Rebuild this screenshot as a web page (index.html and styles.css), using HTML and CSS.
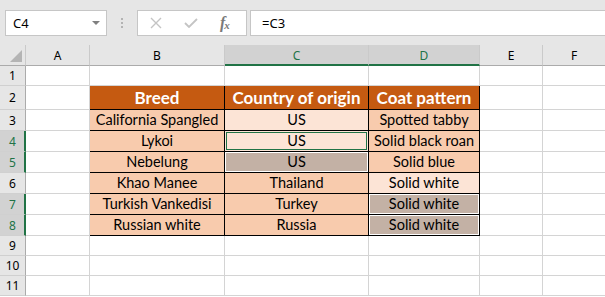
FILE: index.html
```html
<!DOCTYPE html>
<html>
<head>
<meta charset="utf-8">
<link rel="stylesheet" href="styles.css">
</head>
<body>
<div class="toolbar">
  <div class="namebox"><span>C4</span><svg class="dd" width="8" height="4" viewBox="0 0 8 4"><path d="M0 0H8L4 4Z" fill="#808080"/></svg></div>
  <div class="grip"><i></i><i></i><i></i></div>
  <div class="fxbox">
    <svg class="ic-x" width="12" height="12" viewBox="0 0 12 12"><path d="M1 1L11 11M11 1L1 11" stroke="#c4c4c4" stroke-width="1.4" fill="none"/></svg>
    <svg class="ic-ok" width="14" height="10" viewBox="0 0 14 10"><path d="M1 5L5 9L13 1" stroke="#c4c4c4" stroke-width="1.8" fill="none"/></svg>
    <span class="fx">f<sub>x</sub></span>
  </div>
  <div class="formula">=C3</div>
</div>
<div class="sheet">
  <div class="ch corner"><svg width="12" height="12" viewBox="0 0 12 12"><path d="M12 0V12H0Z" fill="#b4b4b4"/></svg></div>
  <div class="ch">A</div>
  <div class="ch">B</div>
  <div class="ch sel">C</div>
  <div class="ch sel">D</div>
  <div class="ch">E</div>
  <div class="ch">F</div>

  <div class="tbl">
    <div class="t hd">Breed</div>
    <div class="t hd">Country of origin</div>
    <div class="t hd">Coat pattern</div>

    <div class="t md">California Spangled</div>
    <div class="t lt">US</div>
    <div class="t md">Spotted tabby</div>

    <div class="t md">Lykoi</div>
    <div class="t lt active">US</div>
    <div class="t md">Solid black roan</div>

    <div class="t md">Nebelung</div>
    <div class="t gr">US</div>
    <div class="t md">Solid blue</div>

    <div class="t md">Khao Manee</div>
    <div class="t md">Thailand</div>
    <div class="t lt">Solid white</div>

    <div class="t md">Turkish Vankedisi</div>
    <div class="t md">Turkey</div>
    <div class="t gr">Solid white</div>

    <div class="t md">Russian white</div>
    <div class="t md">Russia</div>
    <div class="t gr">Solid white</div>
  </div>

  <div class="rh">1</div><div class="c"></div><div class="c"></div><div class="c"></div><div class="c"></div><div class="c"></div><div class="c"></div>
  <div class="rh">2</div><div class="c"></div><div class="c"></div><div class="c"></div>
  <div class="rh">3</div><div class="c"></div><div class="c"></div><div class="c"></div>
  <div class="rh sel">4</div><div class="c"></div><div class="c"></div><div class="c"></div>
  <div class="rh sel">5</div><div class="c"></div><div class="c"></div><div class="c"></div>
  <div class="rh">6</div><div class="c"></div><div class="c"></div><div class="c"></div>
  <div class="rh sel">7</div><div class="c"></div><div class="c"></div><div class="c"></div>
  <div class="rh sel">8</div><div class="c"></div><div class="c"></div><div class="c"></div>
  <div class="rh">9</div><div class="c"></div><div class="c"></div><div class="c"></div><div class="c"></div><div class="c"></div><div class="c"></div>
  <div class="rh">10</div><div class="c"></div><div class="c"></div><div class="c"></div><div class="c"></div><div class="c"></div><div class="c"></div>
  <div class="rh">11</div><div class="c"></div><div class="c"></div><div class="c"></div><div class="c"></div><div class="c"></div><div class="c"></div>
</div>
</body>
</html>
```

FILE: styles.css
```css
* { box-sizing: border-box; margin: 0; padding: 0; }
html, body { margin: 0; }
body {
  width: 605px;
  height: 297px;
  overflow: hidden;
  background: #fff;
  font-family: "Lato", sans-serif;
  color: #000;
}

.toolbar {
  height: 45px;
  background: #e6e6e6;
  display: flex;
  align-items: flex-start;
  padding: 10px 0 0 5px;
}
.namebox {
  width: 102px;
  height: 26px;
  background: #fff;
  border: 1px solid #c6c6c6;
  display: flex;
  align-items: center;
  justify-content: space-between;
  padding: 0 6px 0 7px;
  font-family: "Noto Sans", sans-serif;
  font-size: 13px;
}
.grip {
  width: 30px;
  display: flex;
  flex-direction: column;
  align-items: center;
  gap: 2px;
  padding-top: 8px;
}
.grip i {
  display: block;
  width: 2px;
  height: 2px;
  background: #b3b3b3;
}
.fxbox {
  width: 110px;
  height: 26px;
  background: #fff;
  border: 1px solid #c6c6c6;
  display: flex;
  align-items: center;
  padding-left: 12px;
}
.ic-x { margin-right: 22px; }
.ic-ok { margin-right: 22px; }
.fx {
  font-family: "Liberation Serif", serif;
  font-style: italic;
  font-weight: 700;
  font-size: 16px;
  color: #7a7a7a;
  letter-spacing: -1px;
  line-height: 1;
}
.fx sub { font-size: 11px; vertical-align: -1px; }
.formula {
  flex: 1;
  margin-left: 3px;
  height: 26px;
  background: #fff;
  border: 1px solid #c6c6c6;
  border-right: none;
  padding-left: 11px;
  display: flex;
  align-items: center;
  font-family: "Noto Sans", sans-serif;
  font-size: 13px;
}

.sheet {
  display: grid;
  grid-template-columns: 26px 64px 135px 144px 111px 63px 63px;
  grid-template-rows: 21px 20px 24px repeat(6, 21px) repeat(3, 20px);
}
.c {
  border-right: 1px solid #d4d4d4;
  border-bottom: 1px solid #d4d4d4;
}
.ch {
  background: #e6e6e6;
  border-right: 1px solid #cacaca;
  border-bottom: 1px solid #ababab;
  display: flex;
  align-items: center;
  justify-content: center;
  font-family: "Noto Sans", sans-serif;
  font-size: 12px;
  padding-top: 1px;
}
.ch.sel {
  background: #d2d2d2;
  color: #217346;
  border-bottom: 2px solid #217346;
  padding-top: 2px;
}
.ch.corner {
  justify-content: flex-end;
  align-items: flex-end;
  padding: 0 3px 3px 0;
}
.rh {
  background: #e6e6e6;
  border-right: 1px solid #ababab;
  border-bottom: 1px solid #d0d0d0;
  display: flex;
  align-items: center;
  justify-content: center;
  font-family: "Noto Sans", sans-serif;
  font-size: 12px;
}
.rh.sel {
  background: #d2d2d2;
  color: #217346;
  border-right: 2px solid #217346;
  padding-left: 1px;
}

.tbl {
  grid-column: 3 / 6;
  grid-row: 3 / 10;
  margin: -1px 0 0 -1px;
  border-top: 1px solid #000;
  border-left: 1px solid #000;
  display: grid;
  grid-template-columns: 135px 144px 111px;
  grid-template-rows: 24px repeat(6, 21px);
}
.t {
  border-right: 1px solid #000;
  border-bottom: 1px solid #000;
  display: flex;
  align-items: flex-end;
  justify-content: center;
  font-size: 14.5px;
  line-height: 1;
  padding-bottom: 3px;
  white-space: nowrap;
}
.hd {
  background: #c55a11;
  color: #fff;
  font-weight: 700;
  font-size: 17px;
  padding-bottom: 3px;
}
.md { background: #f8cbad; }
.lt { background: #fce4d6; }
.gr {
  background: #c3b1a5;
  box-shadow: inset 0 0 0 1px #fff;
}
.active {
  box-shadow: inset 0 0 0 1px #fce4d6, inset 0 0 0 2px #217346;
}
```
